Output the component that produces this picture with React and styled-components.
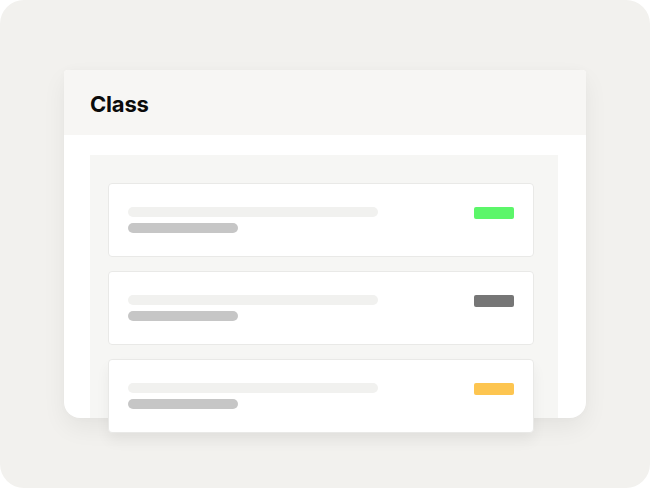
import React from "react";
import styled, { createGlobalStyle } from "styled-components";

const Global = createGlobalStyle`
  html, body { margin: 0; padding: 0; background: #ffffff; }
  body { font-family: Inter, "Noto Sans", sans-serif; }
`;

const Frame = styled.div`
  width: 650px;
  height: 488px;
  box-sizing: border-box;
  background: #f2f1ee;
  border-radius: 24px;
  padding: 70px 64px 0 64px;
  overflow: hidden;
`;

const Panel = styled.div`
  width: 522px;
  height: 348px;
  background: #ffffff;
  border-radius: 4px 4px 16px 16px;
  box-shadow: 0 10px 24px rgba(0, 0, 0, 0.06), 0 0 8px rgba(0, 0, 0, 0.02);
  display: flex;
  flex-direction: column;
`;

const Header = styled.div`
  height: 65px;
  flex: none;
  background: #f7f6f4;
  border-radius: 4px 4px 0 0;
  display: flex;
  align-items: center;
  padding-left: 26px;
  box-sizing: border-box;
`;

const Title = styled.h1`
  margin: 0;
  font-family: Inter, "Noto Sans", sans-serif;
  font-weight: 700;
  font-size: 22px;
  letter-spacing: -0.2px;
  color: #0b0b0b;
  line-height: 1;
  transform: translateY(1px);
`;

const Body = styled.div`
  flex: 1;
  display: flex;
  padding: 20px 28px 0 26px;
  min-height: 0;
`;

const ListArea = styled.div`
  flex: 1;
  background: #f6f6f4;
  padding: 28px 24px 0 18px;
  display: flex;
  flex-direction: column;
  gap: 14px;
`;

const Card = styled.div`
  height: 74px;
  flex: none;
  box-sizing: border-box;
  background: #ffffff;
  border: 1px solid #e9e9e7;
  border-radius: 4px;
  padding: 23px 19px 0 19px;
  display: flex;
  justify-content: space-between;
  align-items: flex-start;
  box-shadow: ${(p) => (p.$last ? "0 8px 14px rgba(0,0,0,0.05)" : "none")};
`;

const Lines = styled.div`
  display: flex;
  flex-direction: column;
  gap: 6px;
`;

const Bar = styled.div`
  height: 10px;
  width: ${(p) => p.$w}px;
  border-radius: 5px;
  background: ${(p) => p.$c};
`;

const Badge = styled.div`
  width: 40px;
  height: 12px;
  border-radius: 2px;
  background: ${(p) => p.$c};
`;

const items = ["#5cf66a", "#767676", "#fdc550"];

export default function App() {
  return (
    <>
      <Global />
      <Frame>
        <Panel>
          <Header>
            <Title>Class</Title>
          </Header>
          <Body>
            <ListArea>
              {items.map((c, i) => (
                <Card key={i} $last={i === items.length - 1}>
                  <Lines>
                    <Bar $w={250} $c="#f1f1ef" />
                    <Bar $w={110} $c="#c6c6c6" />
                  </Lines>
                  <Badge $c={c} />
                </Card>
              ))}
            </ListArea>
          </Body>
        </Panel>
      </Frame>
    </>
  );
}
